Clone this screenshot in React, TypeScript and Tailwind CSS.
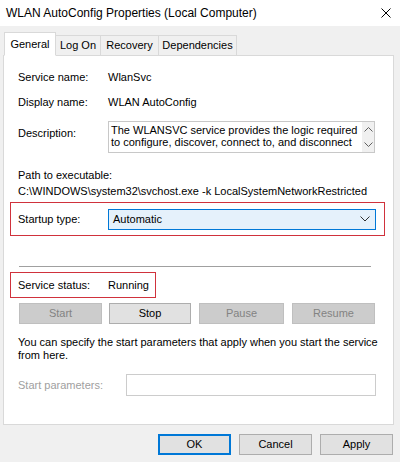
import { useState } from 'react';

const font = { fontFamily: '"Liberation Sans", Arial, sans-serif' };

function Btn({ label, disabled, primary, className = '' }: { label: string; disabled?: boolean; primary?: boolean; className?: string }) {
  return (
    <button
      className={`flex h-[21px] items-center justify-center text-[11px] leading-none ${
        disabled
          ? 'border border-[#bfbfbf] bg-[#cccccc] text-[#838383]'
          : primary
          ? 'border-2 border-[#0078d7] bg-[#e1e1e1] text-black'
          : 'border border-[#adadad] bg-[#e1e1e1] text-black'
      } ${className}`}
    >
      {label}
    </button>
  );
}

function Chevron({ up }: { up?: boolean }) {
  return (
    <svg width="9" height="5" viewBox="0 0 9 5" className="block">
      <polyline
        points={up ? '0.5,4.5 4.5,0.5 8.5,4.5' : '0.5,0.5 4.5,4.5 8.5,0.5'}
        fill="none"
        stroke="#606060"
        strokeWidth="1"
      />
    </svg>
  );
}

export default function App() {
  const [tab] = useState('General');
  const tabs = [
    { label: 'General', w: 'w-[52px]' },
    { label: 'Log On', w: 'w-[46px]' },
    { label: 'Recovery', w: 'w-[59px]' },
    { label: 'Dependencies', w: 'w-[79px]' },
  ];

  return (
    <div className="h-[462px] w-[400px] overflow-hidden bg-[#f0f0f0] text-[11px] text-black" style={font}>
      {/* Title bar */}
      <div className="flex h-[26px] items-center justify-between bg-white pl-[6px] pr-[8px]">
        <span className="text-[12px] leading-none">WLAN AutoConfig Properties (Local Computer)</span>
        <svg width="10" height="10" viewBox="0 0 10 10" className="mr-[1px]">
          <path d="M0.5 0.5 L9.5 9.5 M9.5 0.5 L0.5 9.5" stroke="#000" strokeWidth="1" />
        </svg>
      </div>

      {/* Tabs */}
      <div className="mt-[6px] flex items-end pl-[4px]">
        {tabs.map((t) => {
          const active = t.label === tab;
          return (
            <div
              key={t.label}
              className={`relative z-10 flex items-center justify-center border border-[#d9d9d9] ${t.w} ${
                active
                  ? 'h-[24px] border-b-white bg-white -mb-[1px]'
                  : 'h-[20px] -ml-[1px] border-b-0 bg-[#f0f0f0]'
              }`}
            >
              <span className="leading-none">{t.label}</span>
            </div>
          );
        })}
      </div>

      {/* Panel */}
      <div className="mx-[3px] h-[370px] w-[391px] border border-[#d9d9d9] bg-white">
        <div className="mt-[13px] flex h-[16px] items-center pl-[14px]">
          <span className="w-[90px]">Service name:</span>
          <span>WlanSvc</span>
        </div>
        <div className="mt-[9px] flex h-[16px] items-center pl-[14px]">
          <span className="w-[90px]">Display name:</span>
          <span>WLAN AutoConfig</span>
        </div>
        <div className="mt-[11px] flex pl-[14px]">
          <span className="mt-[4px] h-[16px] w-[90px]">Description:</span>
          <div className="flex h-[32px] w-[267px] overflow-hidden border border-[#c8c8c8]">
            <div className="flex-1 pl-[2px] pt-[2px] leading-[12px] whitespace-nowrap">
              The WLANSVC service provides the logic required
              <br />
              to configure, discover, connect to, and disconnect
            </div>
            <div className="flex w-[12px] flex-col items-center justify-between bg-[#f0f0f0] py-[5px]">
              <Chevron up />
              <Chevron />
            </div>
          </div>
        </div>
        <div className="mt-[14px] flex h-[16px] items-center pl-[14px]">Path to executable:</div>
        <div className="flex h-[16px] items-center pl-[14px] whitespace-nowrap">
          C:\WINDOWS\system32\svchost.exe -k LocalSystemNetworkRestricted
        </div>

        {/* Startup type */}
        <div className="ml-[6px] mt-[3px] flex h-[34px] w-[375px] items-center border border-[#d0323c] pl-[7px]">
          <span className="w-[90px]">Startup type:</span>
          <div className="flex h-[21px] w-[268px] items-center justify-between border border-[#0078d7] bg-[#e5f1fb] pl-[4px] pr-[5px]">
            <span>Automatic</span>
            <svg width="10" height="6" viewBox="0 0 10 6">
              <polyline points="0.5,0.5 5,5 9.5,0.5" fill="none" stroke="#303030" strokeWidth="1" />
            </svg>
          </div>
        </div>

        <div className="ml-[15px] mt-[30px] h-px w-[352px] bg-[#a0a0a0]" />

        {/* Service status */}
        <div className="ml-[6px] mt-[5px] flex h-[26px] w-[146px] items-center border border-[#d0323c] pl-[7px]">
          <span className="w-[90px]">Service status:</span>
          <span>Running</span>
        </div>

        <div className="ml-[15px] mt-[5px] flex">
          <Btn label="Start" disabled className="w-[83px]" />
          <Btn label="Stop" className="ml-[7px] w-[82px]" />
          <Btn label="Pause" disabled className="ml-[8px] w-[85px]" />
          <Btn label="Resume" disabled className="ml-[8px] w-[83px]" />
        </div>

        <div className="ml-[14px] mt-[12px] w-[362px] leading-[13px]">
          You can specify the start parameters that apply when you start the service from here.
        </div>

        <div className="ml-[14px] mt-[12px] flex items-center">
          <span className="w-[108px] text-[#a0a0a0]">Start parameters:</span>
          <div className="h-[22px] w-[250px] border border-[#cccccc] bg-white" />
        </div>
      </div>

      {/* Footer buttons */}
      <div className="mt-[9px] flex justify-end pr-[7px]">
        <Btn label="OK" primary className="w-[73px]" />
        <Btn label="Cancel" className="ml-[8px] w-[73px]" />
        <Btn label="Apply" className="ml-[8px] w-[73px]" />
      </div>
    </div>
  );
}
